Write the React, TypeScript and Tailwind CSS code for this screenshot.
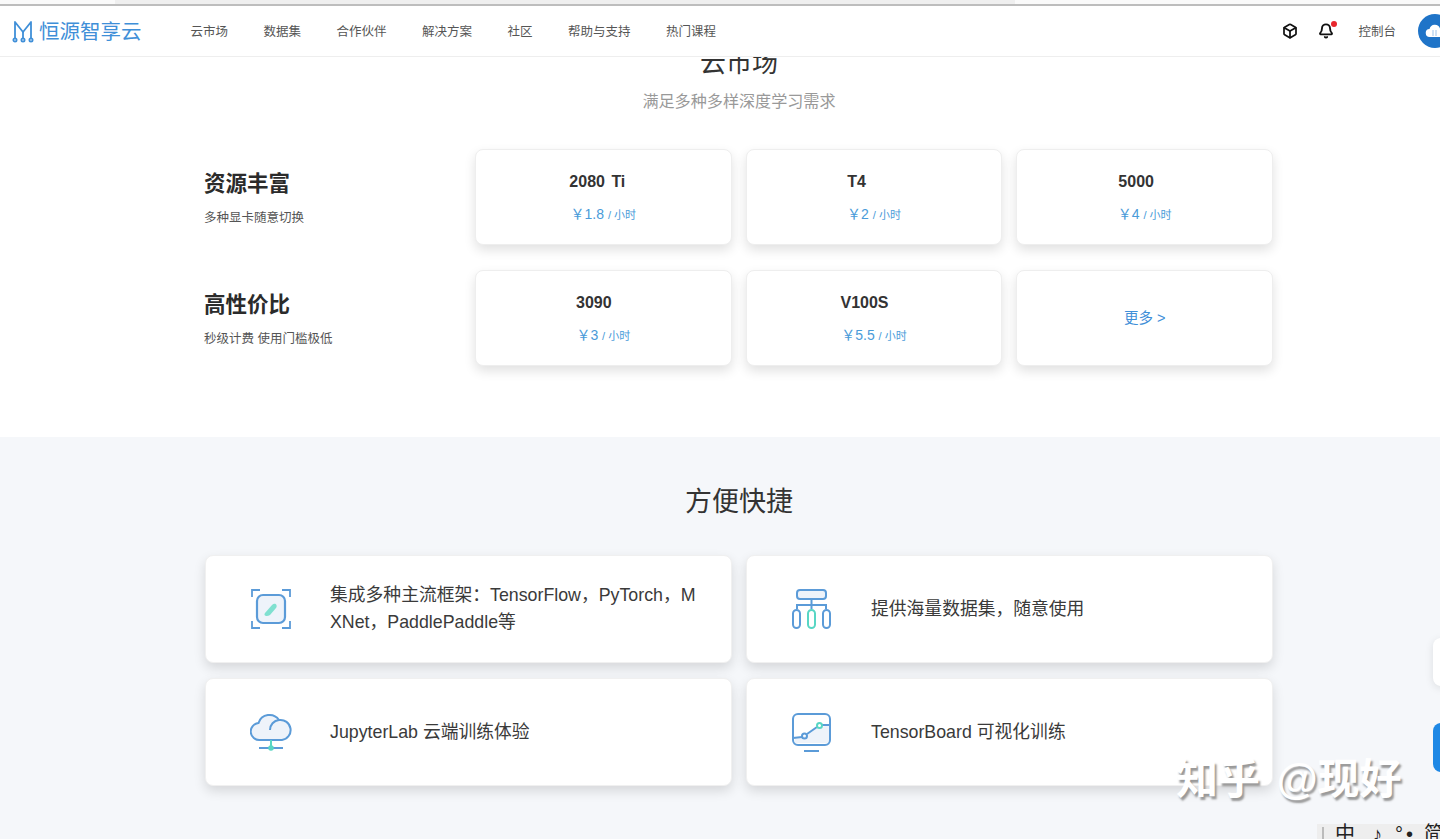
import { Box, Bell } from 'lucide-react';

const font = 'font-["Liberation_Sans","Noto_Sans_CJK_SC",sans-serif]';

const navItems = ['云市场', '数据集', '合作伙伴', '解决方案', '社区', '帮助与支持', '热门课程'];

const rows = [
  {
    title: '资源丰富',
    desc: '多种显卡随意切换',
    cards: [
      { name: '2080 Ti', price: '1.8', shift: 'pr-[12px]' },
      { name: 'T4', price: '2', shift: 'pr-[35px]' },
      { name: '5000', price: '4', shift: 'pr-[17px]' },
    ],
  },
  {
    title: '高性价比',
    desc: '秒级计费 使用门槛极低',
    cards: [
      { name: '3090', price: '3', shift: 'pr-[19px]' },
      { name: 'V100S', price: '5.5', shift: 'pr-[19px]' },
    ],
  },
];

function Logo() {
  return (
    <svg width="22" height="23" viewBox="0 0 22 23" fill="none" stroke="#3f8fd8" strokeWidth="1.800">
      <path d="M3 18V2l8 10 8-10v16" strokeLinejoin="round" />
      <path d="M11 12v6" />
      <circle cx="3" cy="20" r="1.600" />
      <circle cx="11" cy="20" r="1.600" />
      <circle cx="19" cy="20" r="1.600" />
    </svg>
  );
}

function FrameworkIcon() {
  return (
    <svg width="42" height="42" viewBox="0 0 42 42" fill="none">
      <path d="M2 9V2h8M32 2h8v7M2 33v7h8M32 40h8v-7" stroke="#5b9bd8" strokeWidth="1.800" />
      <rect x="7" y="7" width="28" height="28" rx="6" fill="#eef3fa" stroke="#5b9bd8" strokeWidth="2.200" />
      <path d="M15 25l7-8c3-3 6 0 4 3l-6 7c-3 2-7 1-5-2z" fill="#7fe0d0" />
    </svg>
  );
}

function DatasetIcon() {
  return (
    <svg width="42" height="42" viewBox="0 0 42 42" fill="none" stroke="#5b9bd8" strokeWidth="2">
      <rect x="6" y="2" width="29" height="9" rx="3" fill="#eef3fa" />
      <path d="M20.500 11v10M6 21v-4h29v4" />
      <rect x="2" y="22" width="7" height="18" rx="3.500" />
      <rect x="17" y="22" width="7" height="18" rx="3.500" stroke="#58d6c4" />
      <rect x="32" y="22" width="7" height="18" rx="3.500" />
    </svg>
  );
}

function CloudIcon() {
  return (
    <svg width="42" height="42" viewBox="0 0 42 42" fill="none" stroke="#5b9bd8" strokeWidth="2">
      <path d="M10 29a8.500 8.500 0 0 1-1.500-17A11.500 11.500 0 0 1 29 9a10 10 0 0 1 3 20z" fill="#eef3fa" />
      <path d="M20 19a10 10 0 0 1 9-10" />
      <path d="M9 37h24" />
      <path d="M21 29v8" stroke="#58d6c4" />
      <circle cx="21" cy="37" r="1.800" fill="#58d6c4" stroke="#58d6c4" />
    </svg>
  );
}

function BoardIcon() {
  return (
    <svg width="42" height="42" viewBox="0 0 42 42" fill="none" stroke="#5b9bd8" strokeWidth="2">
      <path d="M4 27l11-2 9-7 14-4V32H4z" fill="#eef3fa" stroke="none" />
      <rect x="2" y="3" width="37" height="31" rx="5" />
      <path d="M2 27l9-1M16 23l10-7M31 14h8" />
      <circle cx="13.500" cy="25" r="2.500" />
      <circle cx="28.500" cy="14.500" r="2.500" stroke="#58d6c4" />
      <path d="M13 40h15" />
    </svg>
  );
}

const features = [
  { icon: <FrameworkIcon />, text: '集成多种主流框架：TensorFlow，PyTorch，MXNet，PaddlePaddle等' },
  { icon: <DatasetIcon />, text: '提供海量数据集，随意使用' },
  { icon: <CloudIcon />, text: 'JupyterLab 云端训练体验' },
  { icon: <BoardIcon />, text: 'TensorBoard 可视化训练' },
];

const cardClass =
  'flex h-24 flex-col items-center justify-center rounded-lg border border-[#eeeeee] bg-white shadow-[0_5px_12px_rgba(0,0,0,0.12)]';

export default function App() {
  return (
    <div className={`relative h-[839px] w-[1440px] overflow-hidden bg-white text-[#333] ${font}`}>
      {/* browser edge */}
      <div className="h-[6px] border-b-2 border-[#bdbdbd] bg-[#fafafa]">
        <div className="ml-[115px] h-[4px] w-[900px] bg-[#efefef]" />
      </div>

      {/* Header */}
      <div className="relative z-10 flex h-[51px] items-center border-b border-[#eeeeee] bg-white pl-3">
        <Logo />
        <span className="ml-[5px] mt-[2px] text-[20.500px] text-[#3f8fd8]">恒源智享云</span>
        <div className="ml-[49px] mt-[2px] flex gap-[35.500px] text-[12.500px] text-[#555]">
          {navItems.map(item => (
            <span key={item}>{item}</span>
          ))}
        </div>
        <div className="ml-auto flex items-center">
          <Box size={16} strokeWidth={2.600} className="text-[#111]" />
          <div className="relative ml-5">
            <Bell size={16} strokeWidth={2.800} className="text-[#111]" />
            <span className="absolute -right-[3px] -top-[2px] h-[6px] w-[6px] rounded-full bg-[#e8262d]" />
          </div>
          <span className="ml-6 mt-[2px] text-[12.500px] text-[#555]">控制台</span>
          <div className="-mr-[12px] ml-[22px] flex h-[34px] w-[34px] items-center justify-center rounded-full bg-[#1f74c8]">
            <svg width="20" height="16" viewBox="0 0 20 16" fill="#fff">
              <path d="M5 14a4 4 0 0 1-.5-8A5.500 5.500 0 0 1 15 5.500 4.300 4.300 0 0 1 15.500 14z" />
              <path d="M8 7v6M11 7v6" stroke="#9cc3ea" strokeWidth="1" />
            </svg>
          </div>
        </div>
      </div>

      {/* Market */}
      <div className="-mt-[12px] h-[392px]">
        <div className="ml-[205px] w-[1068px]">
          <div className="text-center">
            <h2 className="text-[26px] font-normal leading-9 text-[#333]">云市场</h2>
            <p className="mt-[8px] text-[16.100px] leading-6 text-[#999]">满足多种多样深度学习需求</p>
          </div>
          <div className="mt-[36px] flex flex-col gap-[25px]">
            {rows.map(row => (
              <div key={row.title} className="flex">
                <div className="-ml-px w-[271px] pt-[19px]">
                  <h3 className="text-[21.500px] font-bold leading-8 text-[#2b2b2b]">{row.title}</h3>
                  <p className="mt-[8px] text-[12.500px] leading-5 text-[#555]">{row.desc}</p>
                </div>
                <div className="grid flex-1 grid-cols-3 gap-[14px]">
                  {row.cards.map(card => (
                    <div key={card.name} className={cardClass}>
                      <span className={`text-base font-bold leading-6 text-[#333] [word-spacing:2px] ${card.shift}`}>{card.name}</span>
                      <span className="mt-[10px] text-sm leading-5 text-[#4a9bd9]">
                        ￥{card.price} <span className="text-[11px]">/ 小时</span>
                      </span>
                    </div>
                  ))}
                  {row.cards.length === 2 && (
                    <div className={cardClass}>
                      <span className="mt-[2px] text-[14.500px] text-[#3f8fd8]">更多 &gt;</span>
                    </div>
                  )}
                </div>
              </div>
            ))}
          </div>
        </div>
      </div>

      {/* Convenience */}
      <div className="h-[402px] bg-[#f5f7fa] pt-[45px]">
        <div className="ml-[205px] w-[1068px]">
          <h2 className="text-center text-[27px] font-normal leading-10 text-[#333]">方便快捷</h2>
          <div className="mt-[33px] grid grid-cols-2 gap-x-[14px] gap-y-[15px]">
            {features.map(f => (
              <div
                key={f.text}
                className="flex h-[108px] items-center rounded-lg border border-[#f0f0f0] bg-white pl-[44px] pr-[24px] shadow-[0_5px_12px_rgba(0,0,0,0.13)]"
              >
                <div className="w-[42px] shrink-0">{f.icon}</div>
                <p className="ml-[38px] break-all text-[17.800px] leading-[27px] text-[#3a3a3a]">{f.text}</p>
              </div>
            ))}
          </div>
        </div>
      </div>

      {/* Floating side buttons */}
      <div className="absolute left-[1433px] top-[638px] h-[48px] w-[20px] rounded-l-lg bg-white shadow-[0_2px_8px_rgba(0,0,0,0.1)]" />
      <div className="absolute left-[1433px] top-[723px] h-[49px] w-[20px] rounded-l-lg bg-[#1e88e5]" />

      {/* Watermark */}
      <div className="absolute left-[1176px] top-[753px] text-[42px] font-bold leading-[54px] text-white [text-shadow:2px_3px_2px_#999] [word-spacing:5px]">
        知乎 @现好
      </div>

      {/* IME bar */}
      <div className="absolute left-[1317px] top-[824px] flex h-[20px] w-[130px] items-center bg-[#eeeeee] pl-[5px] text-xl text-[#222]">
        <span className="h-[14px] w-[2px] bg-[#bbb]" />
        <span className="ml-[11px]">中</span>
        <span className="ml-[17px]">♪</span>
        <span className="ml-[13px] tracking-[3px]">°•</span>
        <span className="ml-[8px]">简</span>
      </div>
    </div>
  );
}
